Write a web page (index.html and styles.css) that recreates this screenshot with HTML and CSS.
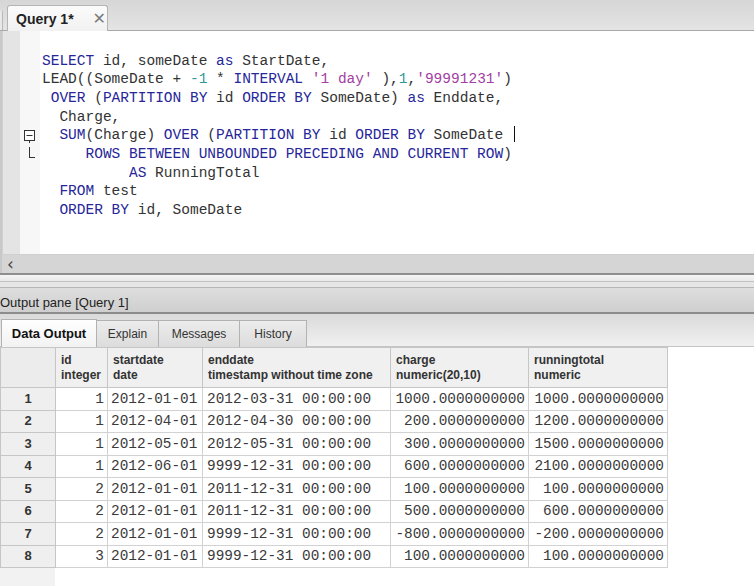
FILE: index.html
```html
<!DOCTYPE html>
<html>
<head>
<meta charset="utf-8">
<link rel="stylesheet" href="styles.css">
</head>
<body>
<div class="app">
  <div class="topbar">
    <div class="edge"></div>
    <div class="qtab"><span class="qtab-label">Query 1*</span><span class="qtab-close">✕</span></div>
  </div>
  <div class="editor">
    <div class="gutter"></div>
    <div class="fold">
      <div class="fline"></div><div class="fline"></div><div class="fline"></div><div class="fline"></div>
      <div class="fline"><svg width="14" height="14" viewBox="0 0 14 14"><rect x="2.5" y="1.5" width="10" height="10" fill="#fff" stroke="#333" stroke-width="1"/><line x1="4.5" y1="6.5" x2="10.5" y2="6.5" stroke="#333" stroke-width="1"/><line x1="7.5" y1="11.5" x2="7.5" y2="14" stroke="#333" stroke-width="1"/></svg></div>
      <div class="fline"><svg width="14" height="14" viewBox="0 0 14 14"><line x1="7.5" y1="0" x2="7.5" y2="10.5" stroke="#333" stroke-width="1"/><line x1="7" y1="10.5" x2="13" y2="10.5" stroke="#333" stroke-width="1"/></svg></div>
    </div>
    <div class="code">
<div class="ln"><span class="kw">SELECT</span> id, someDate <span class="kw">as</span> StartDate,</div>
<div class="ln">LEAD((SomeDate + <span class="num">-1</span> * <span class="kw">INTERVAL</span> <span class="str">'1 day'</span> ),<span class="num">1</span>,<span class="str">'99991231'</span>)</div>
<div class="ln"> <span class="kw">OVER</span> (<span class="kw">PARTITION BY</span> id <span class="kw">ORDER BY</span> SomeDate) <span class="kw">as</span> Enddate,</div>
<div class="ln">  Charge,</div>
<div class="ln">  <span class="kw">SUM</span>(Charge) <span class="kw">OVER</span> (<span class="kw">PARTITION BY</span> id <span class="kw">ORDER BY</span> SomeDate <span class="caret"></span></div>
<div class="ln">     <span class="kw">ROWS BETWEEN UNBOUNDED PRECEDING AND CURRENT ROW</span>)</div>
<div class="ln">          <span class="kw">AS</span> RunningTotal</div>
<div class="ln">  <span class="kw">FROM</span> test</div>
<div class="ln">  <span class="kw">ORDER BY</span> id, SomeDate</div>
    </div>
  </div>
  <div class="hscroll"><span class="arrow">&lsaquo;</span></div>
  <div class="splitter"><div class="sp1"></div><div class="sp2"></div></div>
  <div class="pane-title"><span>Output pane [Query 1]</span></div>
  <div class="tabstrip">
    <div class="otab active">Data Output</div>
    <div class="otab">Explain</div>
    <div class="otab">Messages</div>
    <div class="otab">History</div>
  </div>
  <div class="grid">
    <table class="data">
      <colgroup>
        <col class="c-rn"><col class="c-id"><col class="c-sd"><col class="c-ed"><col class="c-ch"><col class="c-rt">
      </colgroup>
      <thead>
        <tr><th class="rn"></th><th>id<br>integer</th><th>startdate<br>date</th><th>enddate<br>timestamp without time zone</th><th>charge<br>numeric(20,10)</th><th>runningtotal<br>numeric</th></tr>
      </thead>
      <tbody>
        <tr><td class="rn">1</td><td class="r">1</td><td>2012-01-01</td><td>2012-03-31 00:00:00</td><td class="r">1000.0000000000</td><td class="r">1000.0000000000</td></tr>
        <tr><td class="rn">2</td><td class="r">1</td><td>2012-04-01</td><td>2012-04-30 00:00:00</td><td class="r">200.0000000000</td><td class="r">1200.0000000000</td></tr>
        <tr><td class="rn">3</td><td class="r">1</td><td>2012-05-01</td><td>2012-05-31 00:00:00</td><td class="r">300.0000000000</td><td class="r">1500.0000000000</td></tr>
        <tr><td class="rn">4</td><td class="r">1</td><td>2012-06-01</td><td>9999-12-31 00:00:00</td><td class="r">600.0000000000</td><td class="r">2100.0000000000</td></tr>
        <tr><td class="rn">5</td><td class="r">2</td><td>2012-01-01</td><td>2011-12-31 00:00:00</td><td class="r">100.0000000000</td><td class="r">100.0000000000</td></tr>
        <tr><td class="rn">6</td><td class="r">2</td><td>2012-01-01</td><td>2011-12-31 00:00:00</td><td class="r">500.0000000000</td><td class="r">600.0000000000</td></tr>
        <tr><td class="rn">7</td><td class="r">2</td><td>2012-01-01</td><td>9999-12-31 00:00:00</td><td class="r">-800.0000000000</td><td class="r">-200.0000000000</td></tr>
        <tr><td class="rn">8</td><td class="r">3</td><td>2012-01-01</td><td>9999-12-31 00:00:00</td><td class="r">100.0000000000</td><td class="r">100.0000000000</td></tr>
      </tbody>
    </table>
    <div class="filler"><div class="filler-rn"></div></div>
  </div>
</div>
</body>
</html>
```
FILE: styles.css
```css
* { box-sizing: border-box; }
html, body { margin: 0; padding: 0; }
body { width: 754px; height: 586px; overflow: hidden; background: #fff; font-family: "Liberation Sans", Arial, sans-serif; }
.app { display: flex; flex-direction: column; height: 586px; }

.topbar { height: 31px; display: flex; align-items: flex-end; background: linear-gradient(#d6d6d6, #e4e4e4); border-bottom: 1px solid #a9a9a9; padding-left: 0; }
.edge { width: 3px; height: 19px; border-right: 1px solid #b8b8b8; background: #e8e8e8; margin-right: 4px; }
.qtab { width: 101px; height: 26px; margin-bottom: -1px; background: linear-gradient(#fbfbfb, #f1f1f1); border: 1px solid #b4b4b4; border-bottom: none; border-radius: 3px 3px 0 0; display: flex; align-items: center; padding-left: 8px; }
.qtab-label { font-weight: bold; font-size: 14px; color: #222; }
.qtab-close { margin-left: 19px; font-size: 16px; color: #7a7a7a; font-family: "DejaVu Sans", sans-serif; }

.editor { height: 223px; display: flex; background: #fff; border-left: 2px solid #c8c8c8; }
.gutter { width: 18px; background: #e4e4e4; border-left: 1px solid #d0d0d0; }
.fold { width: 20px; background: #f7f7f7; padding-top: 20.5px; }
.fline { height: 18.7px; display: flex; align-items: center; padding-left: 2px; }
.fline svg { display: block; }
.code { padding-top: 20.5px; padding-left: 2px; font-family: "Liberation Mono", "Courier New", monospace; font-size: 14.5px; color: #333; }
.ln { height: 18.7px; line-height: 18.7px; white-space: pre; }
.kw { color: #26269a; }
.num { color: #2f9a9a; }
.str { color: #a23ea2; }
.caret { display: inline-block; width: 1px; height: 16px; background: #111; vertical-align: -3px; margin-left: 2px; }

.hscroll { height: 19px; background: #d5d5d5; border-top: 1px solid #cfcfcf; border-left: 2px solid #c8c8c8; display: flex; align-items: center; }
.arrow { font-family: "DejaVu Sans", sans-serif; font-size: 17px; color: #444; margin-left: 5px; line-height: 1; }

.splitter { height: 15px; border-top: 2px solid #8e8e8e; background: #ececec; display: flex; flex-direction: column; }
.sp1 { height: 7px; background: linear-gradient(#f6f6f6, #e8e8e8); border-bottom: 1px solid #c2c2c2; }
.sp2 { flex: 1; background: #e6e6e6; border-bottom: 1px solid #b6b6b6; }

.pane-title { height: 26px; background: linear-gradient(#dedede, #cfcfcf); display: flex; align-items: center; padding-top: 4px; border-bottom: 2px solid #8c8c8c; }
.pane-title span { margin-left: 0; font-size: 13px; color: #222; }

.tabstrip { height: 33px; display: flex; align-items: flex-end; background: linear-gradient(#dadada, #f0f0f0); padding-left: 1px; border-bottom: 1px solid #c4c4c4; }
.otab { height: 27px; margin-bottom: -1px; display: flex; align-items: center; justify-content: center; font-size: 12px; color: #333; background: linear-gradient(#ececec, #dcdcdc); border: 1px solid #b2b2b2; border-left: none; border-bottom: none; }
.otab.active { width: 96px; font-weight: bold; font-size: 13px; color: #111; background: linear-gradient(#fefefe, #f2f2f2); border-left: 1px solid #b2b2b2; height: 28px; }
.otab:nth-child(2) { width: 62px; }
.otab:nth-child(3) { width: 81px; }
.otab:nth-child(4) { width: 67px; }

.grid { flex: 1; display: flex; flex-direction: column; background: #fff; }
.data { border-collapse: collapse; table-layout: fixed; width: 667px; }
.c-rn { width: 55px; }
.c-id { width: 52px; }
.c-sd { width: 95px; }
.c-ed { width: 188px; }
.c-ch { width: 138px; }
.c-rt { width: 139px; }
.data th { height: 40px; background: #f0f0f0; border: 1px solid #c6c6c6; text-align: left; vertical-align: top; padding: 5px 4px 0 5px; font-size: 12px; font-weight: bold; line-height: 15px; color: #333; white-space: nowrap; overflow: hidden; }
.data th.rn { background: #ececec; }
.data tbody tr { height: 22.5px; }
.data td { border: 1px solid #d2d2d2; font-family: "Liberation Mono", "Courier New", monospace; font-size: 14.4px; color: #3a3a3a; padding: 0 3px 0 3px; white-space: pre; line-height: 20px; overflow: hidden; }
.data td.r { text-align: right; }
.data td:nth-child(4) { padding-left: 4px; }
.data td.rn { background: #efefef; font-family: "Liberation Sans", Arial, sans-serif; font-weight: bold; font-size: 13px; color: #333; text-align: center; border-color: #c6c6c6; }
.filler { flex: 1; display: flex; }
.filler-rn { width: 55px; background: #f2f2f2; }
```
